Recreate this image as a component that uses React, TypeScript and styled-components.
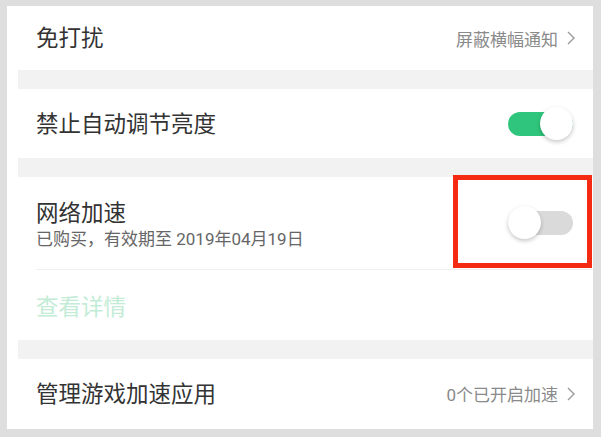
import { FC } from "react";
import { styled, createGlobalStyle } from "styled-components";

const GlobalStyle = createGlobalStyle`
  body {
    margin: 0;
    font-family: Roboto, "Noto Sans CJK SC", sans-serif;
  }
`;

const Chevron: FC = () => (
  <svg width="8" height="14" viewBox="0 0 8 14">
    <path d="M1 1 L7 7 L1 13" fill="none" stroke="#9a9a9a" strokeWidth="1.4" />
  </svg>
);

const Switch: FC<{ on: boolean }> = ({ on }) => (
  <SwitchBox>
    <Track $on={on} />
    <Knob $on={on} />
  </SwitchBox>
);

const App: FC = () => {
  return (
    <Frame>
      <GlobalStyle />
      <Screen>
        <Row $height={64}>
          <Title>免打扰</Title>
          <Extra>
            屏蔽横幅通知
            <Chevron />
          </Extra>
        </Row>
        <Gap />
        <Row $height={69}>
          <Title>禁止自动调节亮度</Title>
          <Switch on />
        </Row>
        <Gap />
        <Row $height={93} $line>
          <TextBlock>
            <Title>网络加速</Title>
            <Sub>已购买，有效期至 2019年04月19日</Sub>
          </TextBlock>
          <Switch on={false} />
        </Row>
        <Row $height={70}>
          <LinkText>查看详情</LinkText>
        </Row>
        <Gap />
        <Row $height={69}>
          <Title>管理游戏加速应用</Title>
          <Extra>
            0个已开启加速
            <Chevron />
          </Extra>
        </Row>
      </Screen>
      <Highlight />
    </Frame>
  );
};

const Frame = styled.div`
  position: relative;
  width: 601px;
  height: 437px;
  box-sizing: border-box;
  padding: 6px 8px 8px 7px;
  background-color: #dedede;
`;

const Screen = styled.div`
  height: 100%;
  padding-left: 11px;
  background-color: #ffffff;
  overflow: hidden;
`;

const Row = styled.div<{ $height: number; $line?: boolean }>`
  display: flex;
  align-items: center;
  justify-content: space-between;
  box-sizing: border-box;
  height: ${(p) => p.$height}px;
  margin-left: 18px;
  padding-right: 18px;
  border-bottom: ${(p) => (p.$line ? "1px solid #efefef" : "none")};
`;

const Gap = styled.div`
  height: 19px;
  background-color: #f2f2f2;
`;

const Title = styled.div`
  font-size: 22.5px;
  line-height: 26px;
  color: #333333;
`;

const TextBlock = styled.div`
  display: flex;
  flex-direction: column;
  gap: 2px;
  padding-top: 4px;
`;

const Sub = styled.div`
  font-size: 17px;
  line-height: 22px;
  color: #666666;
`;

const LinkText = styled.div`
  font-size: 22.5px;
  color: #c3ecd6;
`;

const Extra = styled.div`
  display: flex;
  align-items: center;
  gap: 9px;
  font-size: 17px;
  color: #8a8a8a;
`;

const SwitchBox = styled.div`
  position: relative;
  width: 65px;
  height: 34px;
  margin-right: 2px;
`;

const Track = styled.div<{ $on: boolean }>`
  position: absolute;
  left: 0;
  right: 0;
  top: 5px;
  height: 24px;
  border-radius: 12px;
  background-color: ${(p) => (p.$on ? "#2fc57c" : "#dadada")};
`;

const Knob = styled.div<{ $on: boolean }>`
  position: absolute;
  top: 0;
  left: ${(p) => (p.$on ? "32px" : "0")};
  width: 33px;
  height: 33px;
  border-radius: 50%;
  background-color: #ffffff;
  box-shadow: 0 2px 4px rgba(0, 0, 0, 0.22);
`;

const Highlight = styled.div`
  position: absolute;
  left: 453px;
  top: 175px;
  width: 139px;
  height: 93px;
  box-sizing: border-box;
  border: 5px solid #f52a12;
`;

export default App;
